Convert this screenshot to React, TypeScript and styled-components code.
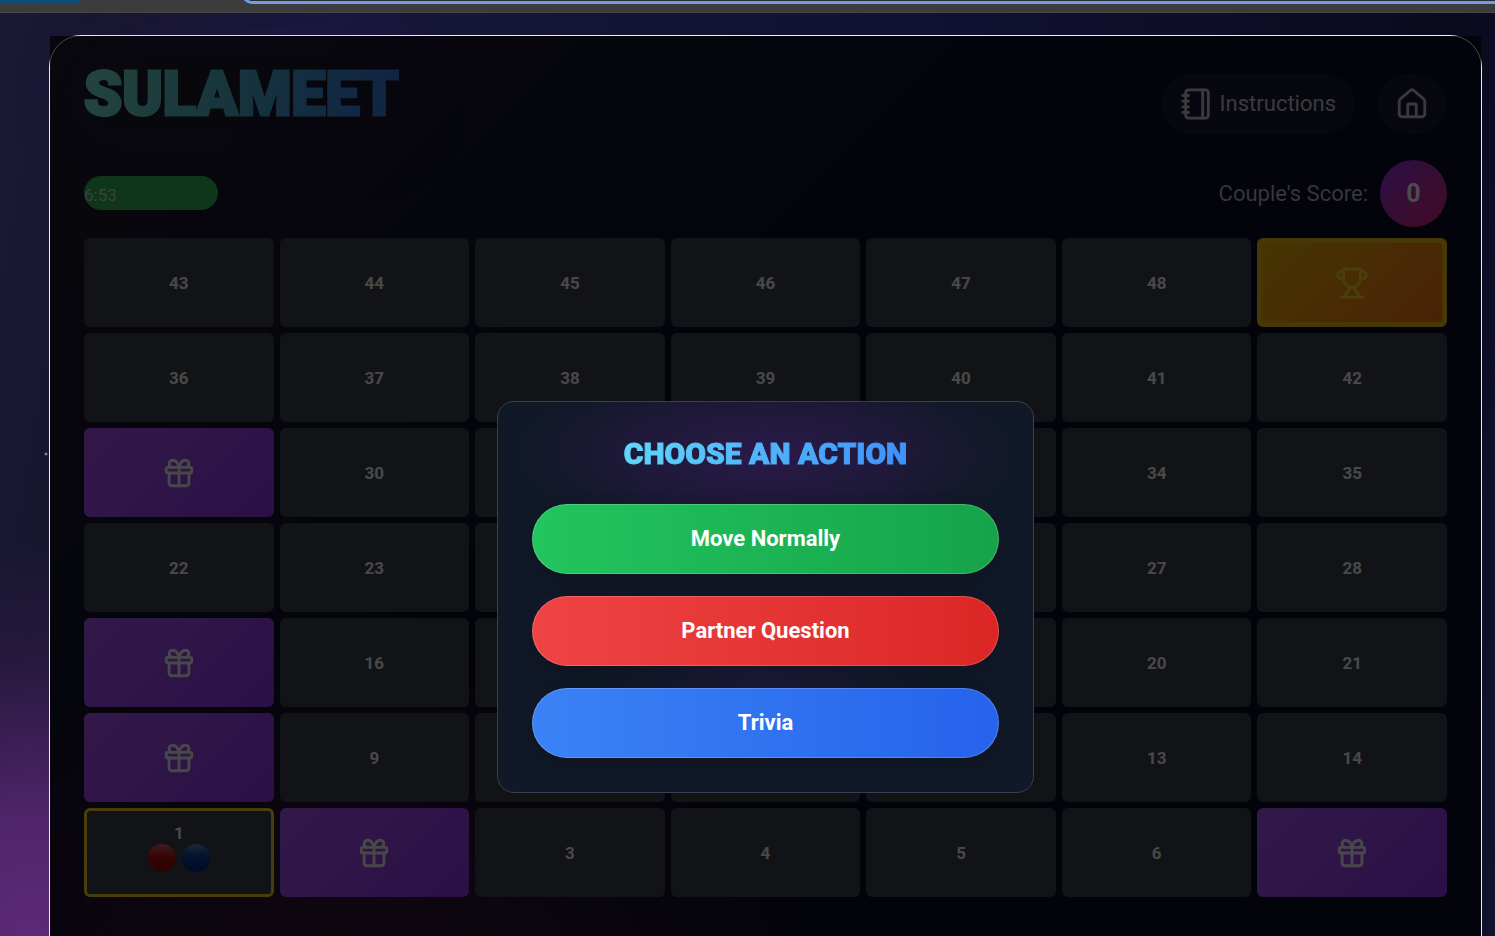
import React from "react";
import styled, { createGlobalStyle, css } from "styled-components";
import { Gift, House, Notebook } from "lucide-react";

const GlobalStyle = createGlobalStyle`
  *, *::before, *::after { box-sizing: border-box; }
  body {
    margin: 0;
    font-family: Roboto, "Liberation Sans", sans-serif;
    color: #ffffff;
    background: #0a0a1c;
  }
  button { font: inherit; color: inherit; cursor: pointer; }
`;

const Screen = styled.div`
  height: 100vh;
  overflow: hidden;
  display: flex;
  flex-direction: column;
`;

const BrowserBar = styled.div`
  flex: none;
  height: 13px;
  display: flex;
  align-items: flex-start;
  gap: 162px;
  overflow: hidden;
  background: #3c3c3c;
  border-bottom: 1px solid #48484a;
`;

const BrowserTab = styled.div`
  width: 80px;
  height: 3px;
  background: #0b4f78;
  border-radius: 0 0 6px 0;
`;

const AddressField = styled.div`
  flex: 1;
  height: 20px;
  margin-top: -16px;
  margin-right: -20px;
  background: #2b2c30;
  border: 3px solid #6f9ceb;
  border-radius: 18px;
`;

const Page = styled.main`
  flex: 1;
  min-height: 0;
  overflow: hidden;
  padding: 22px 13px 0 49px;
  background:
    radial-gradient(circle at 46px 441px, #b8b8c8 0, rgba(160, 160, 180, 0) 2px),
    radial-gradient(ellipse 320px 400px at 30px 100%, #5c2a78 0%, rgba(86, 38, 112, 0.9) 30%, rgba(60, 28, 80, 0.4) 70%, rgba(40, 24, 60, 0) 100%),
    linear-gradient(100deg, #1a1a36 0%, #16162f 8%, #17173a 20%, #101030 60%, #0a0a1e 88%, #10142e 100%);
`;

const Card = styled.section`
  position: relative;
  min-height: 120vh;
  padding: 32px 34px;
  border: 1px solid #f0f0f4;
  border-radius: 32px;
  background:
    radial-gradient(ellipse 500px 360px at 20% 86%, #3c1a3c 0%, rgba(60, 26, 60, 0) 100%),
    linear-gradient(135deg, #1c1c2c 0%, #0c0c28 40%, #0a0a26 100%);
`;

const Header = styled.header`
  display: flex;
  justify-content: space-between;
  align-items: center;
  height: 72px;
`;

const titleText = css`
  margin: 0;
  font-weight: 900;
  color: transparent;
  background-clip: text;
  -webkit-background-clip: text;
`;

const Logo = styled.h1`
  ${titleText}
  font-size: 61px;
  line-height: 72px;
  -webkit-text-stroke: 3px transparent;
  background-image: linear-gradient(100deg, #78e8d0 0%, #50b0cc 45%, #3575e8 100%);
`;

const LogoGlow = styled.div`
  align-self: flex-start;
  margin-top: -10px;
  border-radius: 40px;
  box-shadow: 0 0 70px rgba(88, 28, 135, 0.35);
`;

const Actions = styled.nav`
  display: flex;
  gap: 22px;
`;

const PillButton = styled.button<{ $compact?: boolean }>`
  display: flex;
  align-items: center;
  gap: 6px;
  height: 60px;
  padding: 0 ${(p) => (p.$compact ? 18 : 19)}px;
  border: 0;
  border-radius: 30px;
  color: #c4c4c8;
  font-size: 22px;
  line-height: 32px;
  background: rgba(255, 255, 255, 0.05);
`;

const StatusRow = styled.div`
  display: flex;
  justify-content: space-between;
  align-items: center;
  height: 68px;
  margin: 19px 0 11px;
`;

const Timer = styled.div`
  width: 134px;
  height: 34px;
  border-radius: 17px;
  background: #34b454;
  color: #c8d8c8;
  font-size: 17px;
  line-height: 38px;
`;

const Score = styled.div`
  display: flex;
  align-items: center;
  gap: 12px;
  font-size: 22px;
  color: #b4b4bc;
`;

const ScoreBadge = styled.output`
  display: grid;
  place-items: center;
  width: 67px;
  height: 67px;
  border-radius: 50%;
  font-size: 25px;
  font-weight: 700;
  color: #ffffff;
  background: linear-gradient(135deg, #9333ea, #db2777);
`;

const Board = styled.div`
  display: grid;
  grid-template-columns: repeat(7, 1fr);
  grid-auto-rows: 89px;
  gap: 6px;
`;

type Kind = "plain" | "gift" | "goal" | "start";

const tileLooks = {
  plain: css`background: #3c404c;`,
  gift: css`background: linear-gradient(135deg, #a855f7, #9333ea);`,
  goal: css`
    color: #f8d020;
    background: linear-gradient(135deg, #eab308, #f97316);
    border: 5px solid #f0b818;
  `,
  start: css`
    background: #3c404c;
    border: 3px solid #f4cc30;
  `,
};

const Tile = styled.div<{ $kind: Kind }>`
  display: flex;
  flex-direction: column;
  align-items: center;
  justify-content: center;
  border-radius: 6px;
  font-size: 17px;
  line-height: 22px;
  font-weight: 700;
  color: #f0f0f0;
  ${(p) => tileLooks[p.$kind]}
`;

const Pawns = styled.div`
  display: flex;
  gap: 6px;
  height: 40px;
`;

const Pawn = styled.span<{ $top: string; $mid: string; $low: string }>`
  width: 28px;
  height: 28px;
  border-radius: 50%;
  background: linear-gradient(${(p) => p.$top}, ${(p) => p.$mid} 45%, ${(p) => p.$low});
`;

const Overlay = styled.div`
  position: absolute;
  inset: 0;
  display: flex;
  align-items: center;
  justify-content: center;
  background: rgba(0, 0, 0, 0.7);
`;

const Dialog = styled.div`
  width: 537px;
  padding: 34px;
  border: 1px solid #374151;
  border-radius: 17px;
  background:
    radial-gradient(ellipse 250px 90px at 50% 52px, rgba(88, 28, 135, 0.36) 0%, rgba(88, 28, 135, 0.2) 50%, rgba(88, 28, 135, 0) 100%),
    radial-gradient(ellipse 170px 40px at 50% 276px, rgba(88, 28, 135, 0.16), rgba(88, 28, 135, 0)),
    #111827;
`;

const DialogTitle = styled.h2`
  ${titleText}
  width: fit-content;
  margin: 0 auto 32px;
  font-size: 30px;
  line-height: 36px;
  -webkit-text-stroke: 1px transparent;
  background-image: linear-gradient(100deg, #5fd8f8 0%, #3f8ffa 100%);
`;

const Choices = styled.div`
  display: flex;
  flex-direction: column;
  gap: 22px;
`;

const Choice = styled.button<{ $from: string; $to: string }>`
  height: 70px;
  border: 1px solid rgba(255, 255, 255, 0.2);
  border-radius: 35px;
  font-size: 22px;
  font-weight: 700;
  background: linear-gradient(90deg, ${(p) => p.$from}, ${(p) => p.$to}) border-box;
  box-shadow: 0 8px 20px rgba(0, 0, 0, 0.15);
`;

const GIFTS = [2, 7, 8, 15, 29];
const GOAL = 49;

const rows = Array.from({ length: 7 }, (_, r) => 6 - r);
const cells = rows.flatMap((r) => Array.from({ length: 7 }, (_, c) => r * 7 + c + 1));

const kindOf = (n: number): Kind =>
  n === GOAL ? "goal" : n === 1 ? "start" : GIFTS.includes(n) ? "gift" : "plain";

// Tiles that lie wholly behind the open dialog carry no label.
const isCovered = (n: number) => {
  const row = Math.floor((n - 1) / 7);
  const col = (n - 1) % 7;
  return row >= 1 && row <= 4 && col >= 2 && col <= 4;
};

const TrophyIcon = () => (
  <svg width="34" height="34" viewBox="0 0 24 24" fill="none" stroke="currentColor" strokeWidth="2" strokeLinecap="round" strokeLinejoin="round" aria-hidden="true">
    <path d="M6 9H4.5a2.5 2.5 0 0 1 0-5H6" />
    <path d="M18 9h1.5a2.5 2.5 0 0 0 0-5H18" />
    <path d="M4 22h16" />
    <path d="M10 14.66V17c0 .55-.47.98-.97 1.21C7.85 18.75 7 20.24 7 22" />
    <path d="M14 14.66V17c0 .55.47.98.97 1.21C16.15 18.75 17 20.24 17 22" />
    <path d="M18 2H6v7a6 6 0 0 0 12 0V2Z" />
  </svg>
);

function BoardTile({ n }: { n: number }) {
  const kind = kindOf(n);
  const numbered = (kind === "plain" || kind === "start") && !isCovered(n);
  return (
    <Tile $kind={kind}>
      {kind === "gift" && <Gift size={34} strokeWidth={2} />}
      {kind === "goal" && <TrophyIcon />}
      {numbered && <span>{n}</span>}
      {kind === "start" && (
        <Pawns>
          <Pawn $top="#c86464" $mid="#b41410" $low="#8c0808" />
          <Pawn $top="#5a86b8" $mid="#0c3c9c" $low="#082488" />
        </Pawns>
      )}
    </Tile>
  );
}

export default function App() {
  return (
    <Screen>
      <GlobalStyle />
      <BrowserBar>
        <BrowserTab />
        <AddressField />
      </BrowserBar>
      <Page>
        <Card>
          <Header>
            <LogoGlow>
              <Logo>SULAMEET</Logo>
            </LogoGlow>
            <Actions>
              <PillButton type="button">
                <Notebook size={34} />
                Instructions
              </PillButton>
              <PillButton type="button" $compact aria-label="Home">
                <House size={34} />
              </PillButton>
            </Actions>
          </Header>
          <StatusRow>
            <Timer>6:53</Timer>
            <Score>
              <span>Couple's Score:</span>
              <ScoreBadge>0</ScoreBadge>
            </Score>
          </StatusRow>
          <Board>
            {cells.map((n) => (
              <BoardTile key={n} n={n} />
            ))}
          </Board>
          <Overlay>
            <Dialog role="dialog" aria-labelledby="action-title">
              <DialogTitle id="action-title">CHOOSE AN ACTION</DialogTitle>
              <Choices>
                <Choice type="button" $from="#22c55e" $to="#16a34a">Move Normally</Choice>
                <Choice type="button" $from="#ef4444" $to="#dc2626">Partner Question</Choice>
                <Choice type="button" $from="#3b82f6" $to="#2563eb">Trivia</Choice>
              </Choices>
            </Dialog>
          </Overlay>
        </Card>
      </Page>
    </Screen>
  );
}
